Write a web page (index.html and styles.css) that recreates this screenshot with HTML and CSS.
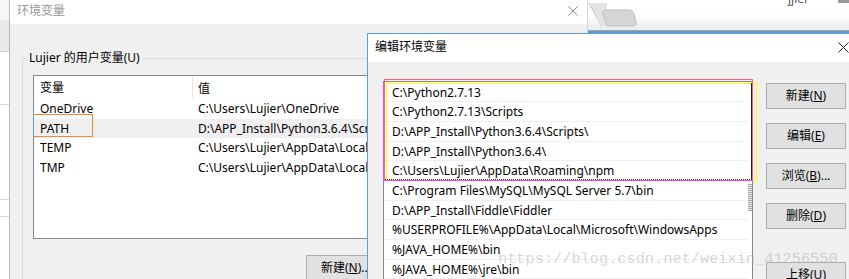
FILE: index.html
```html
<!doctype html>
<html lang="zh-CN">
<head>
	<meta charset="UTF-8">
	<title>编辑环境变量</title>
	<link rel="stylesheet" href="styles.css">
</head>
<body>
<div class="desk">

	<div class="bg-left">
		<div class="bl-top"></div>
		<div class="bl-gray"></div>
		<div class="bl-row bl-r1"></div>
		<div class="bl-row bl-r2"></div>
		<div class="bl-row bl-r3"></div>
		<div class="bl-rest"></div>
	</div>

	<div class="bg-right">
		<svg class="tabs" width="262" height="30" viewBox="0 0 262 30">
			<path d="M2 3 L15 27" stroke="#b8b8b8" stroke-width="1" fill="none"/>
			<path d="M3 3 L14 26 L20 26 L20 3 Z" fill="#e4e4e4"/>
			<path d="M20 26 L16 14 Q15 10 19 10 L42 10 Q46 10 47 14 L49 22 Q50 26 46 26 Z" fill="#d6d6d6" stroke="#bdbdbd" stroke-width="1"/>
			<rect x="251" y="0" width="11" height="3" fill="#9a9a9a"/>
		</svg>
		<span class="bg-user">jjier</span>
	</div>

	<div class="win win-env">
		<div class="titlebar">
			<span class="title">环境变量</span>
			<svg class="close" width="10" height="10" viewBox="0 0 10 10">
				<path d="M0.5 0.5 L9.5 9.5 M9.5 0.5 L0.5 9.5" stroke="#8a8a8a" stroke-width="1"/>
			</svg>
		</div>
		<div class="body">
			<fieldset class="group">
				<legend>Lujier 的用户变量(U)</legend>
				<div class="lv">
					<div class="lv-head">
						<span class="c1">变量</span>
						<span class="c2">值</span>
					</div>
					<div class="lv-row"><span class="c1">OneDrive</span><span class="c2">C:\Users\Lujier\OneDrive</span></div>
					<div class="lv-row sel"><span class="c1">PATH</span><span class="c2">D:\APP_Install\Python3.6.4\Scripts\;D:\APP_Install\Python3.6.4\</span></div>
					<div class="lv-row"><span class="c1">TEMP</span><span class="c2">C:\Users\Lujier\AppData\Local\Temp</span></div>
					<div class="lv-row"><span class="c1">TMP</span><span class="c2">C:\Users\Lujier\AppData\Local\Temp</span></div>
				</div>
				<div class="group-btns">
					<button class="btn">新建(<u>N</u>)...</button>
				</div>
			</fieldset>
		</div>
	</div>

	<div class="win win-edit">
		<div class="titlebar">
			<span class="title">编辑环境变量</span>
			<svg class="close" width="11" height="11" viewBox="0 0 11 11">
				<path d="M0.5 0.5 L10.5 10.5 M10.5 0.5 L0.5 10.5" stroke="#222" stroke-width="1"/>
			</svg>
		</div>
		<div class="body edit-body">
			<div class="pathlist">
				<div class="items">
					<div class="item">C:\Python2.7.13</div>
					<div class="item">C:\Python2.7.13\Scripts</div>
					<div class="item">D:\APP_Install\Python3.6.4\Scripts\</div>
					<div class="item">D:\APP_Install\Python3.6.4\</div>
					<div class="item">C:\Users\Lujier\AppData\Roaming\npm</div>
					<div class="item">C:\Program Files\MySQL\MySQL Server 5.7\bin</div>
					<div class="item">D:\APP_Install\Fiddle\Fiddler</div>
					<div class="item">%USERPROFILE%\AppData\Local\Microsoft\WindowsApps</div>
					<div class="item">%JAVA_HOME%\bin</div>
					<div class="item">%JAVA_HOME%\jre\bin</div>
				</div>
				<div class="scroll"><div class="thumb"></div></div>
			</div>
			<div class="side-btns">
				<button class="btn">新建(<u>N</u>)</button>
				<button class="btn">编辑(<u>E</u>)</button>
				<button class="btn">浏览(<u>B</u>)...</button>
				<button class="btn">删除(<u>D</u>)</button>
				<button class="btn btn-up">上移(<u>U</u>)</button>
			</div>
		</div>
	</div>

	<!-- marks drawn over the screenshot -->
	<div class="mk mk-path"></div>
	<div class="mk mk-yellow"></div>
	<div class="mk mk-red"></div>
	<div class="mk mk-pink"></div>
	<div class="mk mk-dark"></div>

	<div class="watermark">https://blog.csdn.net/weixin_41256550</div>
</div>
</body>
</html>
```

FILE: styles.css
```css
* {
	margin: 0;
	padding: 0;
	box-sizing: border-box;
}

body {
	font-family: "Noto Sans", "Noto Sans CJK SC", sans-serif;
	font-size: 12px;
	color: #000;
	background: #fff;
}

.desk {
	position: relative;
	width: 849px;
	height: 279px;
	overflow: hidden;
	background: #fff;
}

/* window behind, left edge */
.bg-left {
	position: absolute;
	left: 0;
	top: 0;
	width: 9px;
	height: 279px;
	display: flex;
	flex-direction: column;
}
.bl-top {
	height: 20px;
	background: #f6f6f6;
}
.bl-gray {
	height: 32px;
	background: #e9e9e9;
	border-bottom: 1px solid #cfcfcf;
}
.bl-row {
	background: #fff;
	border-bottom: 1px solid #dadada;
}
.bl-r1 { height: 53px; }
.bl-r2 { height: 95px; }
.bl-r3 { height: 17px; }
.bl-rest {
	flex: 1;
	background: #fff;
}

/* window behind, top right */
.bg-right {
	position: absolute;
	left: 587px;
	top: 0;
	width: 262px;
	height: 33px;
	background: linear-gradient(#fff 0, #fdfdfd 55%, #ececec 92%);
	border-bottom: 2px solid #5f9bd3;
	box-shadow: inset 0 -1px 0 #a5a5a5;
}
.tabs {
	display: block;
}
.bg-user {
	position: absolute;
	left: 201px;
	top: -8px;
	font-size: 12px;
	color: #555;
	line-height: 14px;
}

/* dialogs */
.win {
	position: absolute;
	display: flex;
	flex-direction: column;
	overflow: hidden;
}
.titlebar {
	display: flex;
	align-items: center;
	justify-content: space-between;
	background: #fff;
	flex: none;
}
.title {
	line-height: 16px;
}
.body {
	flex: 1;
	background: #f0f0f0;
}

.win-env {
	left: 9px;
	top: 0;
	width: 579px;
	height: 279px;
	border-left: 1px solid #b9b9b9;
	border-right: 1px solid #d4d4d4;
}
.win-env .titlebar {
	height: 24px;
	padding: 0 9px 2px 7px;
}
.win-env .title {
	color: #9a9a9a;
}
.win-env .body {
	padding-left: 12px;
}

.group {
	margin-top: 26px;
	width: 560px;
	height: 240px;
	border: 1px solid #dcdcdc;
	padding: 0;
}
.group legend {
	margin-left: 4px;
	padding: 0 2px;
	line-height: 16px;
}

.lv {
	margin: 9px 0 0 10px;
	width: 500px;
	height: 164px;
	border: 1px solid #828790;
	background: #fff;
}
.lv-head, .lv-row {
	display: flex;
	white-space: nowrap;
}
.lv-head {
	height: 23px;
	align-items: center;
}
.lv-head .c1 {
	border-right: 1px solid #e5e5e5;
	height: 21px;
	line-height: 21px;
}
.lv-row {
	height: 19.7px;
	line-height: 19.7px;
}
.lv-row.sel {
	background: #efefef;
}
.c1 {
	width: 159px;
	padding-left: 6px;
	flex: none;
}
.c2 {
	padding-left: 5px;
}

.group-btns {
	padding: 16px 0 0 283px;
}

.btn {
	display: block;
	width: 80px;
	height: 26px;
	background: #e1e1e1;
	border: 1px solid #adadad;
	font-family: "Noto Sans", "Noto Sans CJK SC", sans-serif;
	font-size: 12px;
	color: #000;
	line-height: 22px;
	text-align: center;
}

.win-edit {
	left: 367px;
	top: 33px;
	width: 482px;
	height: 246px;
	border-left: 1px solid #5a9fdc;
	border-top: 1px solid #5a9fdc;
}
.win-edit .titlebar {
	height: 28px;
	padding: 0 0 2px 7px;
}
.edit-body {
	display: flex;
	align-items: flex-start;
	padding: 19px 0 0 15px;
}

.pathlist {
	width: 370px;
	height: 220px;
	display: flex;
	background: #fff;
	border: 1px solid #828790;
	border-bottom: none;
	flex: none;
}
.items {
	flex: 1;
	padding-top: 0.5px;
	white-space: nowrap;
	overflow: hidden;
}
.item {
	height: 19.7px;
	line-height: 19px;
	padding-left: 8px;
	border-bottom: 1px solid #f0f0f0;
}
.scroll {
	width: 4px;
	flex: none;
}
.thumb {
	margin-top: 102px;
	height: 27px;
	background: repeating-linear-gradient(#a8a8a8 0 1px, #e8e8e8 1px 2px);
}

.side-btns {
	margin: 2px 0 0 13px;
	display: flex;
	flex-direction: column;
	gap: 14px;
}
.side-btns .btn-up {
	margin-top: 19px;
}

/* coloured marks */
.mk {
	position: absolute;
}
.mk-path {
	left: 33px;
	top: 114px;
	width: 60px;
	height: 23px;
	border: 1px solid #f08a3a;
	border-left-color: #5d9cdb;
}
.mk-yellow {
	left: 386px;
	top: 83px;
	width: 371px;
	height: 98px;
	border: 1px solid #ffff00;
}
.mk-red {
	left: 384px;
	top: 79px;
	width: 369px;
	height: 102px;
	border: 1px solid #f06a78;
}
.mk-pink {
	left: 383px;
	top: 82px;
	width: 368px;
	height: 99px;
	border-left: 1px solid #ff40ff;
	border-bottom: 1px solid #ff40ff;
}
.mk-dark {
	left: 385px;
	top: 83px;
	width: 367px;
	height: 97px;
	border-right: 1px solid #3d1414;
	border-bottom: 1px dotted #4a3a10;
}

.watermark {
	position: absolute;
	left: 498px;
	top: 250px;
	font-family: "Liberation Mono", monospace;
	font-size: 15.3px;
	line-height: 18px;
	color: rgba(175, 175, 175, 0.5);
	white-space: nowrap;
}
```
